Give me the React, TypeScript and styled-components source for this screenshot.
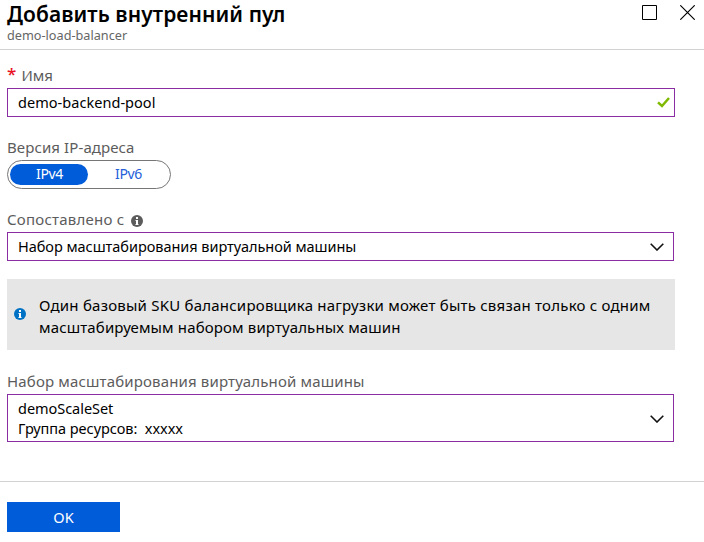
import React from "react";
import styled, { createGlobalStyle } from "styled-components";

const GlobalStyle = createGlobalStyle`
  * { box-sizing: border-box; }
  html, body { margin: 0; padding: 0; background: #fff; overflow: hidden; }
  body { font-family: "Noto Sans", "Open Sans", sans-serif; color: #000; }
  button { font-family: inherit; }
`;

const Panel = styled.main`
  display: flex;
  flex-direction: column;
  width: 704px;
  height: 542px;
  background: #fff;
`;

const Header = styled.header`
  display: flex;
  justify-content: space-between;
  height: 50px;
  padding: 0 9px 0 7px;
  border-bottom: 1px solid #d2d2d2;
`;

const Title = styled.h1`
  margin: 0;
  font-size: 21px;
  line-height: 28px;
  font-weight: 600;
  white-space: nowrap;
`;

const Subtitle = styled.div`
  font-size: 12.7px;
  line-height: 14px;
  color: #666;
`;

const WindowActions = styled.div`
  display: flex;
  gap: 23px;
  padding-top: 5px;
`;

const IconButton = styled.button`
  display: flex;
  width: 15px;
  height: 15px;
  padding: 0;
  border: 0;
  background: none;
`;

const Form = styled.form`
  display: flex;
  flex-direction: column;
  align-items: flex-start;
  height: 431px;
  padding: 14px 29px 0 7px;
`;

const Field = styled.div<{ $gap: number }>`
  width: 100%;
  margin-bottom: ${(p) => p.$gap}px;
`;

const Label = styled.div`
  display: flex;
  height: 24px;
  font-size: 15px;
  line-height: 22px;
  color: #5c5c5c;
  white-space: nowrap;
`;

const Required = styled.span`
  width: 14.5px;
  color: #e81123;
  font-size: 17px;
  font-weight: 500;
  line-height: 20px;
`;

const HelpIcon = styled.span`
  display: flex;
  align-items: center;
  padding: 2px 0 0 7px;
`;

const Text = styled.span<{ $spacing?: number }>`
  display: block;
  width: max-content;
  letter-spacing: ${(p) => p.$spacing ?? 0}px;
  white-space: pre;
`;

const Box = styled.div<{ $width: number; $height: number; $right: number; $top?: number }>`
  display: flex;
  align-items: center;
  justify-content: space-between;
  width: ${(p) => p.$width}px;
  height: ${(p) => p.$height}px;
  padding: ${(p) => p.$top ?? 0}px ${(p) => p.$right}px 0 10px;
  border: 1px solid #8a2da5;
  font-size: 14.5px;
  line-height: 20px;
`;

const Value = styled.div`
  padding-bottom: 2px;
`;

const Toggle = styled.div`
  display: flex;
  width: 164px;
  height: 29px;
  padding: 2px;
  border: 1px solid #767676;
  border-radius: 15px;
`;

const Segment = styled.button<{ $active?: boolean }>`
  display: flex;
  align-items: center;
  justify-content: center;
  width: ${(p) => (p.$active ? 78 : 80)}px;
  height: 21px;
  margin-top: 1px;
  padding: 0 0 1px 1px;
  border: 0;
  border-radius: 11px;
  font-size: 14px;
  line-height: 20px;
  color: ${(p) => (p.$active ? "#fff" : "#2460d8")};
  background: ${(p) => (p.$active ? "#015cda" : "transparent")};
`;

const Notice = styled.div`
  display: flex;
  align-items: center;
  width: 668px;
  height: 71px;
  margin-bottom: 20px;
  padding: 0 0 1px 7px;
  background: #e6e6e6;
  font-size: 15px;
  line-height: 22px;
`;

const NoticeBody = styled.div`
  padding: 3px 0 0 13px;
`;

const Footer = styled.footer`
  height: 61px;
  padding: 20px 7px;
  border-top: 1px solid #d2d2d2;
`;

const Submit = styled.button`
  display: flex;
  align-items: center;
  justify-content: center;
  width: 113px;
  height: 30px;
  padding: 0 0 1px;
  border: 0;
  color: #fff;
  background: #015cda;
  font-size: 14.5px;
`;

const Info = ({ color }: { color: string }) => (
  <svg width="12" height="12" viewBox="0 0 12 12">
    <circle cx="6" cy="6" r="6" fill={color} />
    <path d="M5 2h2v2H5zM4.5 5H7v4h.5v1h-3V9H5V6h-.5z" fill="#fff" />
  </svg>
);

const Chevron = () => (
  <svg width="14" height="8" viewBox="0 0 14 8" fill="none">
    <path d="M.7.8 7 7l6.300-6.200" stroke="#111" strokeWidth="1.6" />
  </svg>
);

export default function App() {
  return (
    <>
      <GlobalStyle />
      <Panel>
        <Header>
          <div>
            <Title><Text $spacing={0.08}>Добавить внутренний пул</Text></Title>
            <Subtitle><Text>demo-load-balancer</Text></Subtitle>
          </div>
          <WindowActions>
            <IconButton aria-label="Развернуть">
              <svg width="15" height="15"><path d="M.5.5h14v14H.5z" fill="none" stroke="#000" /></svg>
            </IconButton>
            <IconButton aria-label="Закрыть">
              <svg width="15" height="15"><path d="M.3.3l14.400 14.400M14.700.3.3 14.700" stroke="#000" strokeWidth="1.150" /></svg>
            </IconButton>
          </WindowActions>
        </Header>
        <Form>
          <Field $gap={19}>
            <Label><Required>*</Required><Text $spacing={-0.1}>Имя</Text></Label>
            <Box $width={668} $height={29} $right={4}>
              <Value><Text $spacing={0.04}>demo-backend-pool</Text></Value>
              <svg width="13" height="11" viewBox="0 0 13 11" fill="none">
                <path d="M1 5.300 5 9 12 1" stroke="#7fba00" strokeWidth="2.500" />
              </svg>
            </Box>
          </Field>
          <Field $gap={19}>
            <Label><Text $spacing={0.1}>Версия IP-адреса</Text></Label>
            <Toggle>
              <Segment type="button" $active><Text $spacing={-0.35}>IPv4</Text></Segment>
              <Segment type="button"><Text $spacing={-0.35}>IPv6</Text></Segment>
            </Toggle>
          </Field>
          <Field $gap={18}>
            <Label>
              <Text $spacing={0.23}>Сопоставлено с</Text>
              <HelpIcon><Info color="#5c5c5c" /></HelpIcon>
            </Label>
            <Box $width={667} $height={29} $right={9}>
              <Value><Text $spacing={-0.04}>Набор масштабирования виртуальной машины</Text></Value>
              <Chevron />
            </Box>
          </Field>
          <Notice>
            <Info color="#0072c6" />
            <NoticeBody>
              <Text $spacing={0.22}>Один базовый SKU балансировщика нагрузки может быть связан только с одним</Text>
              <Text $spacing={0.14}>масштабируемым набором виртуальных машин</Text>
            </NoticeBody>
          </Notice>
          <Field $gap={0}>
            <Label><Text $spacing={0.15}>Набор масштабирования виртуальной машины</Text></Label>
            <Box $width={667} $height={48} $right={9} $top={2}>
              <Value>
                <Text $spacing={-0.04}>demoScaleSet</Text>
                <Text $spacing={-0.04}>Группа ресурсов:  xxxxx</Text>
              </Value>
              <Chevron />
            </Box>
          </Field>
        </Form>
        <Footer><Submit><Text>OK</Text></Submit></Footer>
      </Panel>
    </>
  );
}
